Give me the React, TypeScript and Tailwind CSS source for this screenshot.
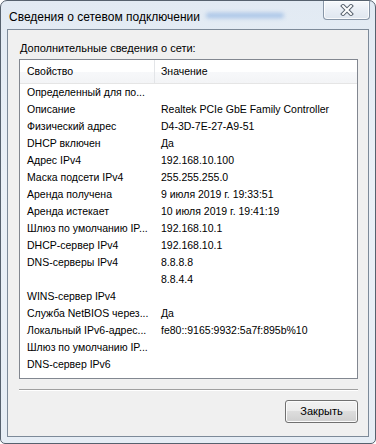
import React from "react";

const rows: [string, string][] = [
  ["Определенный для по...", ""],
  ["Описание", "Realtek PCIe GbE Family Controller"],
  ["Физический адрес", "D4-3D-7E-27-A9-51"],
  ["DHCP включен", "Да"],
  ["Адрес IPv4", "192.168.10.100"],
  ["Маска подсети IPv4", "255.255.255.0"],
  ["Аренда получена", "9 июля 2019 г. 19:33:51"],
  ["Аренда истекает", "10 июля 2019 г. 19:41:19"],
  ["Шлюз по умолчанию IP...", "192.168.10.1"],
  ["DHCP-сервер IPv4", "192.168.10.1"],
  ["DNS-серверы IPv4", "8.8.8.8"],
  ["", "8.8.4.4"],
  ["WINS-сервер IPv4", ""],
  ["Служба NetBIOS через...", "Да"],
  ["Локальный IPv6-адрес...", "fe80::9165:9932:5a7f:895b%10"],
  ["Шлюз по умолчанию IP...", ""],
  ["DNS-сервер IPv6", ""],
];

function CloseGlyph() {
  return (
    <svg width="14" height="12" viewBox="0 0 14 12">
      <path d="M3 2 L11 10 M11 2 L3 10" stroke="#5a6470" strokeWidth="4" strokeLinecap="square" fill="none" />
      <path d="M3 2 L11 10 M11 2 L3 10" stroke="#ffffff" strokeWidth="2" strokeLinecap="square" fill="none" />
    </svg>
  );
}

export default function App() {
  return (
    <div
      className="w-[376px] h-[444px] bg-white text-black"
      style={{ fontFamily: '"Liberation Sans", Arial, sans-serif' }}
    >
      <div className="w-[376px] h-[444px] flex flex-col border border-[#56616e] rounded-t-[7px] rounded-b-[5px] bg-[linear-gradient(180deg,#e2eaf3_0%,#eaf0f7_40%,#e6edf5_100%)] overflow-hidden">
        {/* Title bar */}
        <div className="h-[28px] flex items-start shrink-0">
          <div className="pl-[8px] pt-[9px] text-[12px] leading-[14px] whitespace-nowrap text-black">
            Сведения о сетевом подключении
          </div>
          <div className="mt-[12px] ml-[6px] w-[78px] h-[5px] rounded-full bg-[#8db2e2] blur-[2px] opacity-70" />
          <div className="ml-auto mr-[5px] w-[47px] h-[19px] rounded-b-[4px] border border-t-0 border-[#8896a7] bg-[linear-gradient(180deg,#f7f9fc_0%,#e9eef5_50%,#dfe6ef_100%)] shadow-[inset_0_0_0_1px_rgba(255,255,255,0.8)] flex items-center justify-center">
            <CloseGlyph />
          </div>
        </div>

        {/* Client area */}
        <div className="mx-[6px] h-[408px] shrink-0 border border-[#7d8a99] bg-[#f0f0f0] flex flex-col pl-[11px] pr-[10px]">
          <div className="pt-[11px] pl-[1px] text-[11px] leading-[14px] whitespace-nowrap">
            Дополнительные сведения о сети:
          </div>

          <div className="mt-[4px] h-[320px] border border-[#828790] bg-white flex flex-col text-[10.5px] overflow-hidden">
            <div className="h-[24px] flex shrink-0 border-b border-[#e5e5e5] bg-[linear-gradient(180deg,#ffffff_0%,#ffffff_50%,#f7f8fa_50%,#f3f4f6_100%)]">
              <div className="w-[135px] pl-[7px] flex items-center border-r border-[#e3e5e8]">Свойство</div>
              <div className="pl-[6px] flex items-center">Значение</div>
            </div>
            <div className="flex flex-col">
              {rows.map(([k, v], i) => (
                <div key={i} className="h-[17px] flex items-center whitespace-nowrap">
                  <div className="w-[135px] pl-[7px] overflow-hidden">{k}</div>
                  <div className="pl-[6px]">{v}</div>
                </div>
              ))}
            </div>
          </div>

          <div className="mt-[10px] h-[2px] border-t border-[#a0a0a0] border-b border-b-white" />

          <div className="mt-[9px] flex justify-end">
            <div className="w-[73px] h-[23px] rounded-[3px] border border-[#707070] bg-[linear-gradient(180deg,#f2f2f2_0%,#ebebeb_50%,#dddddd_50%,#cfcfcf_100%)] shadow-[inset_0_0_0_1px_#fbfbfb] flex items-center justify-center text-[11px]">
              Закрыть
            </div>
          </div>
        </div>
      </div>
    </div>
  );
}
